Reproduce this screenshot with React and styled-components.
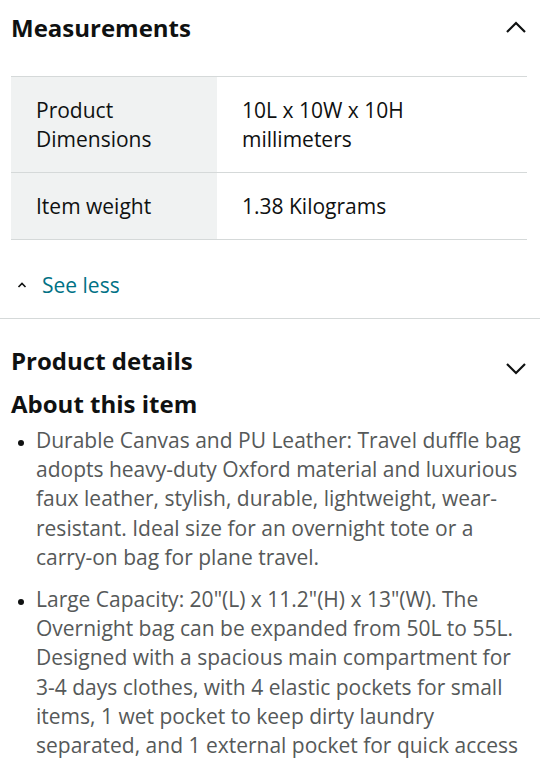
import React from "react";
import styled, { createGlobalStyle } from "styled-components";

const GlobalStyle = createGlobalStyle`
  body {
    margin: 0;
    background: #ffffff;
    font-family: "Open Sans", "Noto Sans", Arial, sans-serif;
    color: #0f1111;
  }
`;

const Page = styled.div`
  width: 540px;
  height: 765px;
  overflow: hidden;
  background: #fff;
`;

const Section = styled.section`
  padding: 0 13px 0 11px;
`;

const SectionHeader = styled.div`
  display: flex;
  align-items: center;
  justify-content: space-between;
  height: ${(props) => props.h || "56px"};
  padding-top: ${(props) => props.pt || "0"};
`;

const Title = styled.h2`
  margin: 0;
  font-size: 24px;
  line-height: 32px;
  font-weight: 700;
  color: #0f1111;
`;

const Chevron = styled.svg`
  width: 22px;
  height: 22px;
  margin-top: ${(props) => props.mt || "0"};
`;

const Table = styled.div`
  margin-top: 20px;
  border-top: 1px solid #d5d9d9;
  width: 516px;
`;

const Row = styled.div`
  display: grid;
  grid-template-columns: 206px 1fr;
  border-bottom: 1px solid #d5d9d9;
`;

const Cell = styled.div`
  padding: 19px 25px 18px;
  font-size: 21px;
  line-height: 29px;
  background: ${(props) => (props.$label ? "#f0f2f2" : "#fff")};
  color: #0f1111;
`;

const SeeLess = styled.div`
  display: flex;
  align-items: center;
  gap: 14px;
  height: 66px;
  padding: 12px 0 0 5px;
  font-size: 21px;
  color: #007185;
`;

const SmallUp = styled.svg`
  width: 12px;
  height: 12px;
`;

const Divider = styled.hr`
  margin: 0;
  border: 0;
  border-top: 1px solid #d5d9d9;
`;

const SubTitle = styled.h3`
  margin: 11px 0 0;
  font-size: 24px;
  font-weight: 700;
  line-height: 32px;
  color: #0f1111;
`;

const Bullets = styled.ul`
  margin: 6px 0 0;
  padding: 0 0 0 25px;
`;

const Bullet = styled.li`
  font-size: 21px;
  line-height: 29.2px;
  color: #565959;
  margin-bottom: 13px;
  white-space: nowrap;
  &::marker {
    color: #0f1111;
    font-size: 16px;
  }
`;

const Up = () => (
  <Chevron viewBox="0 0 22 22">
    <path d="M2 15 L11 6 L20 15" fill="none" stroke="#0f1111" strokeWidth="2.2" />
  </Chevron>
);

const Down = () => (
  <Chevron viewBox="0 0 22 22" mt="14px">
    <path d="M2 7 L11 16 L20 7" fill="none" stroke="#0f1111" strokeWidth="2.2" />
  </Chevron>
);

const bullets = [
  [
    "Durable Canvas and PU Leather: Travel duffle bag",
    "adopts heavy-duty Oxford material and luxurious",
    "faux leather, stylish, durable, lightweight, wear-",
    "resistant. Ideal size for an overnight tote or a",
    "carry-on bag for plane travel.",
  ],
  [
    "Large Capacity: 20\"(L) x 11.2\"(H) x 13\"(W). The",
    "Overnight bag can be expanded from 50L to 55L.",
    "Designed with a spacious main compartment for",
    "3-4 days clothes, with 4 elastic pockets for small",
    "items, 1 wet pocket to keep dirty laundry",
    "separated, and 1 external pocket for quick access",
  ],
];

export default function App() {
  return (
    <Page>
      <GlobalStyle />
      <Section>
        <SectionHeader>
          <Title>Measurements</Title>
          <Up />
        </SectionHeader>
        <Table>
          <Row>
            <Cell $label>Product<br />Dimensions</Cell>
            <Cell>10L x 10W x 10H<br />millimeters</Cell>
          </Row>
          <Row>
            <Cell $label>Item weight</Cell>
            <Cell>1.38 Kilograms</Cell>
          </Row>
        </Table>
        <SeeLess>
          <SmallUp viewBox="0 0 12 12">
            <path d="M2.5 8 L6 4.5 L9.5 8" fill="none" stroke="#0f1111" strokeWidth="1.6" />
          </SmallUp>
          See less
        </SeeLess>
      </Section>
      <Divider />
      <Section>
        <SectionHeader h="32px" pt="26px">
          <Title>Product details</Title>
          <Down />
        </SectionHeader>
        <SubTitle>About this item</SubTitle>
        <Bullets>
          {bullets.map((lines, i) => (
            <Bullet key={i}>
              {lines.map((l, j) => (
                <React.Fragment key={j}>
                  {j > 0 && <br />}
                  {l}
                </React.Fragment>
              ))}
            </Bullet>
          ))}
        </Bullets>
      </Section>
    </Page>
  );
}
